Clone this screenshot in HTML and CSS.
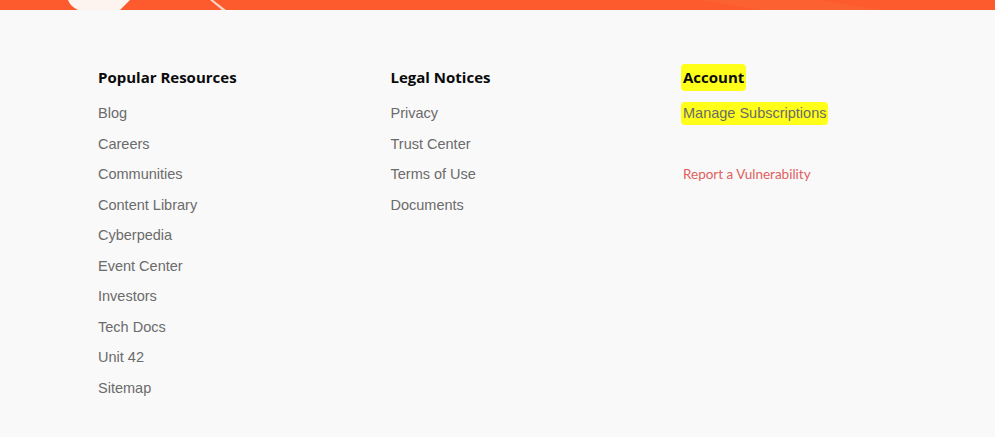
FILE: index.html
```
<!DOCTYPE html>
<html lang="en">

<head>
    <meta charset="UTF-8">
    <meta name="viewport" content="width=device-width, initial-scale=1.0">
    <title>Footer</title>
    <link rel="stylesheet" href="styles.css">
</head>

<body>
    <div class="top-bar">
        <svg class="top-art" width="995" height="10" viewBox="0 0 995 10">
            <path d="M68 0 L130 0 L120 10 L78 10 Q70 6 68 0 Z" fill="#fdf3ef" />
            <path d="M210 0 L213 0 L226 10 L222 10 Z" fill="#f7d6c8" />
            <path d="M700 0 L820 0 L880 10 L760 10 Z" fill="#fb6a33" opacity="0.5" />
        </svg>
    </div>

    <div class="footer">
        <div class="col">
            <h4>Popular Resources</h4>
            <ul>
                <li><a href="#">Blog</a></li>
                <li><a href="#">Careers</a></li>
                <li><a href="#">Communities</a></li>
                <li><a href="#">Content Library</a></li>
                <li><a href="#">Cyberpedia</a></li>
                <li><a href="#">Event Center</a></li>
                <li><a href="#">Investors</a></li>
                <li><a href="#">Tech Docs</a></li>
                <li><a href="#">Unit 42</a></li>
                <li><a href="#">Sitemap</a></li>
            </ul>
        </div>
        <div class="col">
            <h4>Legal Notices</h4>
            <ul>
                <li><a href="#">Privacy</a></li>
                <li><a href="#">Trust Center</a></li>
                <li><a href="#">Terms of Use</a></li>
                <li><a href="#">Documents</a></li>
            </ul>
        </div>
        <div class="col">
            <h4><span class="marker">Account</span></h4>
            <ul>
                <li><a href="#" class="marker">Manage Subscriptions</a></li>
                <li class="empty"></li>
                <li><a href="#" class="report">Report a Vulnerability</a></li>
            </ul>
        </div>
    </div>
</body>

</html>
```

FILE: styles.css
```
* {
    box-sizing: border-box;
}

body {
    margin: 0;
    background: #f9f9f9;
    font-family: "Liberation Sans", Arial, sans-serif;
    height: 437px;
    overflow: hidden;
}

.top-bar {
    height: 10px;
    background: #fd5a2e;
    overflow: hidden;
}

.top-art {
    display: block;
}

.footer {
    display: flex;
    padding: 57px 0 0 98px;
}

.col {
    width: 292.5px;
}

h4 {
    margin: 0;
    font-family: "Open Sans", sans-serif;
    font-weight: 700;
    font-size: 15px;
    line-height: 20px;
    color: #0a0a0a;
}

ul {
    list-style: none;
    margin: 11px 0 0;
    padding: 0;
}

li {
    height: 30.5px;
    line-height: 30.5px;
}

a {
    color: #6b6b6b;
    font-size: 14.5px;
    text-decoration: none;
}

.marker {
    background: #ffff1a;
    border-radius: 4px;
    padding: 3px 2px 4px;
    margin-left: -2px;
}

.report {
    font-family: Lato, sans-serif;
    font-size: 13.5px;
    color: #e0605e;
}
```
